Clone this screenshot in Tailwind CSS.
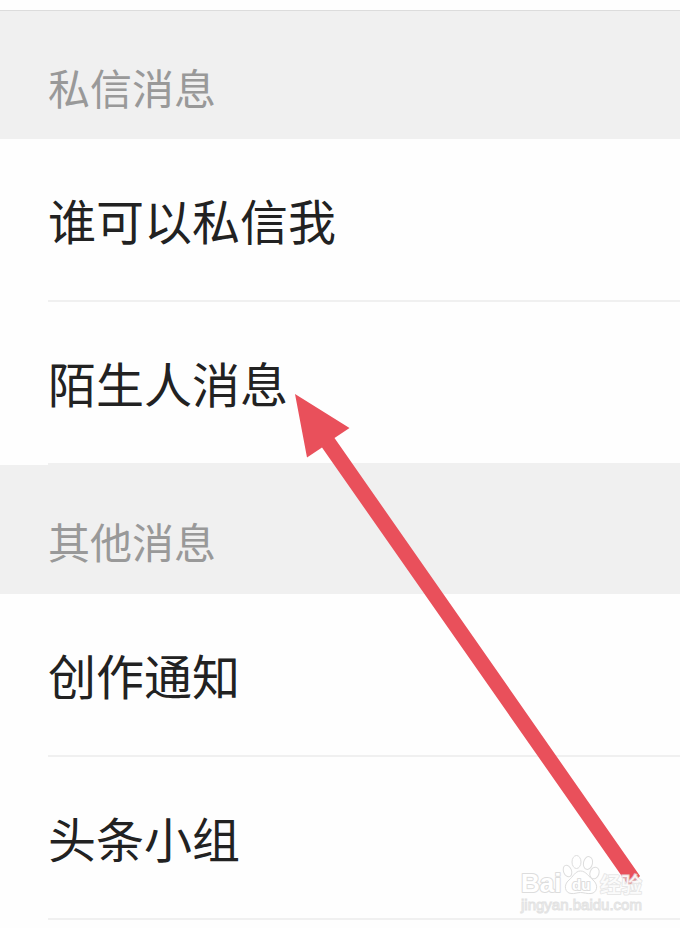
<!DOCTYPE html>
<html lang="zh-CN">
<head>
    <meta charset="UTF-8">
    <meta name="viewport" content="width=device-width, initial-scale=1.0">
    <title>消息设置</title>
    <script src="https://cdn.jsdelivr.net/npm/@tailwindcss/browser@4"></script>
</head>
<body class="bg-[#fefefe] font-['Noto_Sans_CJK_SC',sans-serif] text-[#222222]">
    <main class="relative pt-[10px] overflow-hidden">
        <section>
            <h2 class="h-[129px] pt-[46px] pl-12 bg-[#f0f0f0] border-t border-[#dcdcdc] text-[42px] leading-[60px] text-[#999999]">私信消息</h2>
            <ul class="pl-12 text-[48px] leading-[72px]">
                <li class="h-[163px] pt-11 border-b-2 border-[#f0f0f0]">谁可以私信我</li>
                <li class="h-[163px] pt-11 border-b-2 border-[#f0f0f0]">陌生人消息</li>
            </ul>
        </section>

        <section>
            <h2 class="h-[129px] pt-[46px] pl-12 bg-[#f0f0f0] text-[42px] leading-[60px] text-[#999999]">其他消息</h2>
            <ul class="pl-12 text-[48px] leading-[72px]">
                <li class="h-[163px] pt-11 border-b-2 border-[#f0f0f0]">创作通知</li>
                <li class="h-[163px] pt-11 border-b-2 border-[#f0f0f0]">头条小组</li>
            </ul>
        </section>

        <!-- Arrow pointing at the stranger messages row -->
        <svg class="absolute left-[295px] top-[394px] w-[347px] h-[492px]" viewBox="295 394 347 492" aria-hidden="true">
            <path fill="#e9505b" d="M295 394L349.500 428L334.500 438L640 876Q635 883 628 885L322 447.500L307 457.500Z"/>
        </svg>

        <!-- Watermark -->
        <svg class="absolute left-[515px] top-[850px] w-[135px] h-[66px]" viewBox="515 850 135 66">
            <g fill="#ffffff" fill-opacity="0.8" stroke="#dddddd" stroke-width="1">
                <ellipse cx="567.500" cy="871" rx="4" ry="6" transform="rotate(-20 567.500 871)"/>
                <ellipse cx="576.500" cy="862" rx="4.500" ry="6.500"/>
                <ellipse cx="588" cy="863" rx="4.500" ry="6.500" transform="rotate(12 588 863)"/>
                <ellipse cx="594.500" cy="873" rx="4.500" ry="6" transform="rotate(20 594.500 873)"/>
                <path d="M580.500 871C575 871 573 877 569 880C563 885 565 893 571 893.500C575 894 577 892.500 580.500 892.500C584 892.500 587 894 591 893.500C597 893 599 885 593 880C589 877 586 871 580.500 871Z"/>
            </g>
            <g fill="#ffffff" stroke="#dddddd" stroke-width="2" stroke-linejoin="round" class="[paint-order:stroke] font-bold">
                <text x="521" y="892" font-size="26" font-family="Liberation Sans, sans-serif">Bai</text>
                <text x="572" y="890" font-size="15" font-family="Liberation Sans, sans-serif">du</text>
                <text x="600" y="892" font-size="21" stroke-opacity="0.7" fill-opacity="0.85" font-family="Noto Sans CJK SC, sans-serif" font-weight="500">经验</text>
            </g>
            <text x="521" y="910" font-size="15" fill="#ffffff" stroke="#e2e2e2" stroke-width="1" font-family="Liberation Sans, sans-serif">jingyan.baidu.com</text>
        </svg>
    </main>
</body>
</html>
